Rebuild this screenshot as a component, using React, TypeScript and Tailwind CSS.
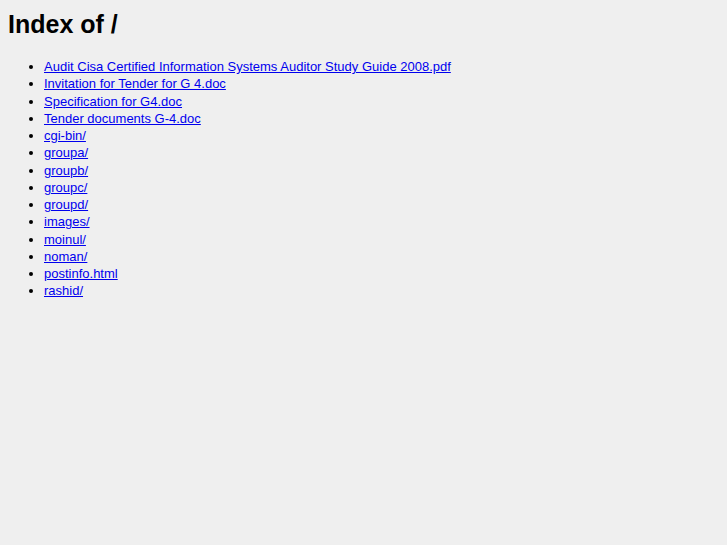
const files = [
  "Audit Cisa Certified Information Systems Auditor Study Guide 2008.pdf",
  "Invitation for Tender for G 4.doc",
  "Specification for G4.doc",
  "Tender documents G-4.doc",
  "cgi-bin/",
  "groupa/",
  "groupb/",
  "groupc/",
  "groupd/",
  "images/",
  "moinul/",
  "noman/",
  "postinfo.html",
  "rashid/",
];

export default function App() {
  return (
    <div className="min-h-[545px] bg-[#efefef] p-2 text-black" style={{ fontFamily: '"Liberation Sans", Arial, sans-serif' }}>
      <h1 className="mt-[1px] text-[25px] font-bold leading-[30px]">Index of /</h1>
      <ul className="mt-[19px] list-disc pl-[36px] text-[13px] leading-[17.25px]">
        {files.map((f) => (
          <li key={f} className="h-[17.25px]">
            <a href={"/" + f} className="text-[#0000ee] underline">
              {f}
            </a>
          </li>
        ))}
      </ul>
    </div>
  );
}
